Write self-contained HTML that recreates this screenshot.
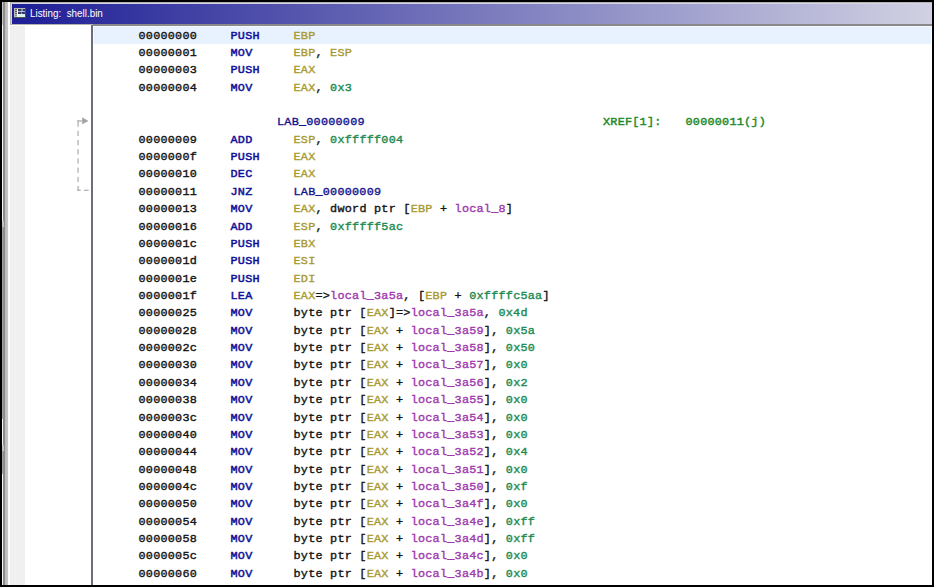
<!DOCTYPE html>
<html><head><meta charset="utf-8">
<style>
html,body{margin:0;padding:0;}
body{width:934px;height:587px;position:relative;overflow:hidden;background:#000;font-family:"Liberation Mono",monospace;}
.abs{position:absolute;}
#lstrip{left:2px;top:2px;width:8px;height:583px;background:linear-gradient(to right,#8c8c8c 0,#8c8c8c 2.6px,#b8b8b8 2.6px,#c6c6c6 5.8px,#fafafa 5.8px,#ffffff 8px);}
#title{left:10px;top:2px;width:922px;height:23px;background:#b4b4ac;}
#titleb{left:11px;top:3px;width:921px;height:20.8px;background:#d4d4ec;}
#titlein{left:12px;top:4px;width:920px;height:19.8px;background:linear-gradient(to right,rgb(30,30,150) 0px,rgb(240,240,240) 1080px);}
#titletxt{left:30px;top:4px;height:19.6px;line-height:19.6px;color:#fff;font-family:"Liberation Sans",sans-serif;font-size:10.6px;white-space:pre;transform-origin:0 0;transform:scaleX(0.93);}
#gpanel{left:10px;top:25px;width:15px;height:560px;background:#f0f0f0;border-top:1px solid #fafafa;box-sizing:border-box;}
#wpanel{left:25px;top:25px;width:66px;height:560px;background:#fff;}
#divider{left:91px;top:24.5px;width:2px;height:560.5px;background:#6c7076;}
#listing{left:93px;top:24.5px;width:839px;height:560.5px;background:#fff;}
#ltop{left:93px;top:24px;width:839px;height:1.5px;background:#8a8a8a;}
#hl{left:93px;top:25.5px;width:838px;height:18.3px;background:#e8f2fe;box-sizing:border-box;border-top:1px solid #f3f8ff;border-left:1.5px solid #f6faff;}
.row{position:absolute;left:0;width:934px;height:17.36px;line-height:17.36px;font-size:11.8px;letter-spacing:0.24px;-webkit-text-stroke-width:0.38px;white-space:pre;color:#111;}
.row span{position:absolute;top:0;}
.ad{left:138.5px;color:#141414;}
.mn{left:230.5px;color:#10109a;-webkit-text-stroke-width:0.5px;}
.op{left:293.5px;}
.op span{position:static!important;}
.r{color:#a89a30;}
.p{color:#141414;}
.c{color:#1c8a50;}
.v{color:#a03aae;}
.l{color:#14148e;}
.lab{color:#14148e;}
.xr{color:#1f8a2a;-webkit-text-stroke-width:0.45px;}
</style></head><body>
<div class="abs" id="lstrip"></div>
<div class="abs" style="left:2px;top:2px;width:1px;height:23px;background:#c8c8c8"></div>
<div class="abs" style="left:2px;top:25px;width:1px;height:196px;background:#f6f6f6"></div>
<div class="abs" style="left:2px;top:221px;width:2px;height:6px;background:#c4c4c4"></div>
<div class="abs" style="left:2px;top:227px;width:1px;height:192px;background:#a4a4a4"></div>
<div class="abs" style="left:2px;top:419px;width:1px;height:26px;background:#f6f6f6"></div>
<div class="abs" style="left:2px;top:445px;width:2px;height:6px;background:#c4c4c4"></div>
<div class="abs" style="left:2px;top:451px;width:1px;height:23px;background:#a4a4a4"></div>
<div class="abs" style="left:2px;top:474px;width:1px;height:111px;background:#f6f6f6"></div>
<div class="abs" style="left:8px;top:2px;width:2px;height:2px;background:#ffffff"></div>
<div class="abs" id="title"></div>
<div class="abs" id="titleb"></div>
<div class="abs" id="titlein"></div>
<svg class="abs" style="left:14px;top:8px" width="12" height="10" viewBox="0 0 12 10" shape-rendering="crispEdges">
<rect x="0" y="0" width="12" height="10" fill="#505050"/>
<rect x="0" y="0" width="11" height="9" fill="#b8b8b4"/>
<rect x="0.6" y="1" width="2.6" height="0.9" fill="#505050"/>
<rect x="0.6" y="3" width="2.6" height="0.9" fill="#505050"/>
<rect x="0.6" y="5" width="2.6" height="0.9" fill="#606060"/>
<rect x="0.6" y="7" width="2.6" height="0.9" fill="#909090"/>
<rect x="3.2" y="0.5" width="0.8" height="8.5" fill="#ffffff"/>
<rect x="4" y="0" width="7" height="1" fill="#b8b8a8"/>
<rect x="4" y="1" width="7" height="2" fill="#343c5c"/>
<rect x="6.5" y="1.3" width="2" height="1.2" fill="#6890c0"/>
<rect x="4" y="3" width="7" height="1.1" fill="#b8b4e4"/>
<rect x="4" y="4.4" width="7" height="1.5" fill="#343a64"/>
<rect x="7" y="4.4" width="0.8" height="1.5" fill="#9090c8"/>
<rect x="4" y="6" width="7" height="3" fill="#d8f6ee"/>
</svg>
<div class="abs" id="titletxt">Listing:  shell.bin</div>
<div class="abs" id="gpanel"></div>
<div class="abs" id="wpanel"></div>
<div class="abs" id="divider"></div>
<div class="abs" id="listing"></div>
<div class="abs" id="ltop"></div>
<div class="abs" id="hl"></div>
<svg class="abs" style="left:70px;top:110px" width="22" height="90" viewBox="0 0 22 90">
<g fill="#a4a4a4">
<rect x="7.5" y="10.4" width="1.1" height="6.3"/>
<rect x="7.5" y="20.8" width="1.1" height="5.2"/>
<rect x="7.5" y="30" width="1.1" height="5.3"/>
<rect x="7.5" y="39.2" width="1.1" height="5.3"/>
<rect x="7.5" y="48.4" width="1.1" height="5.3"/>
<rect x="7.5" y="57.6" width="1.1" height="5.3"/>
<rect x="7.5" y="66.8" width="1.1" height="5.3"/>
<rect x="7.5" y="76" width="1.1" height="5"/>
<rect x="7.5" y="79.7" width="3.2" height="1.1"/>
<rect x="14" y="79.7" width="4.7" height="1.1"/>
<rect x="7.5" y="10.4" width="5.5" height="1.1"/>
<path d="M12.2 7.2 L18.5 11 L12.2 14.3 Z"/>
</g>
</svg>
<div class="row" style="top:27.60px"><span class="ad">00000000</span><span class="mn">PUSH</span><span class="op"><span class="r">EBP</span></span></div>
<div class="row" style="top:44.96px"><span class="ad">00000001</span><span class="mn">MOV</span><span class="op"><span class="r">EBP</span><span class="p">,&nbsp;</span><span class="r">ESP</span></span></div>
<div class="row" style="top:62.32px"><span class="ad">00000003</span><span class="mn">PUSH</span><span class="op"><span class="r">EAX</span></span></div>
<div class="row" style="top:79.68px"><span class="ad">00000004</span><span class="mn">MOV</span><span class="op"><span class="r">EAX</span><span class="p">,&nbsp;</span><span class="c">0x3</span></span></div>
<div class="row" style="top:114.40px"><span class="lab" style="left:277px">LAB_00000009</span><span class="xr" style="left:603px">XREF[1]:</span><span class="xr" style="left:685.5px">00000011(j)</span></div>
<div class="row" style="top:131.76px"><span class="ad">00000009</span><span class="mn">ADD</span><span class="op"><span class="r">ESP</span><span class="p">,&nbsp;</span><span class="c">0xfffff004</span></span></div>
<div class="row" style="top:149.12px"><span class="ad">0000000f</span><span class="mn">PUSH</span><span class="op"><span class="r">EAX</span></span></div>
<div class="row" style="top:166.48px"><span class="ad">00000010</span><span class="mn">DEC</span><span class="op"><span class="r">EAX</span></span></div>
<div class="row" style="top:183.84px"><span class="ad">00000011</span><span class="mn">JNZ</span><span class="op"><span class="l">LAB_00000009</span></span></div>
<div class="row" style="top:201.20px"><span class="ad">00000013</span><span class="mn">MOV</span><span class="op"><span class="r">EAX</span><span class="p">,&nbsp;dword&nbsp;ptr&nbsp;[</span><span class="r">EBP</span><span class="p">&nbsp;+&nbsp;</span><span class="v">local_8</span><span class="p">]</span></span></div>
<div class="row" style="top:218.56px"><span class="ad">00000016</span><span class="mn">ADD</span><span class="op"><span class="r">ESP</span><span class="p">,&nbsp;</span><span class="c">0xfffff5ac</span></span></div>
<div class="row" style="top:235.92px"><span class="ad">0000001c</span><span class="mn">PUSH</span><span class="op"><span class="r">EBX</span></span></div>
<div class="row" style="top:253.28px"><span class="ad">0000001d</span><span class="mn">PUSH</span><span class="op"><span class="r">ESI</span></span></div>
<div class="row" style="top:270.64px"><span class="ad">0000001e</span><span class="mn">PUSH</span><span class="op"><span class="r">EDI</span></span></div>
<div class="row" style="top:288.00px"><span class="ad">0000001f</span><span class="mn">LEA</span><span class="op"><span class="r">EAX</span><span class="p">=&gt;</span><span class="v">local_3a5a</span><span class="p">,&nbsp;[</span><span class="r">EBP</span><span class="p">&nbsp;+&nbsp;</span><span class="c">0xffffc5aa</span><span class="p">]</span></span></div>
<div class="row" style="top:305.36px"><span class="ad">00000025</span><span class="mn">MOV</span><span class="op"><span class="p">byte&nbsp;ptr&nbsp;[</span><span class="r">EAX</span><span class="p">]=&gt;</span><span class="v">local_3a5a</span><span class="p">,&nbsp;</span><span class="c">0x4d</span></span></div>
<div class="row" style="top:322.72px"><span class="ad">00000028</span><span class="mn">MOV</span><span class="op"><span class="p">byte&nbsp;ptr&nbsp;[</span><span class="r">EAX</span><span class="p">&nbsp;+&nbsp;</span><span class="v">local_3a59</span><span class="p">],&nbsp;</span><span class="c">0x5a</span></span></div>
<div class="row" style="top:340.08px"><span class="ad">0000002c</span><span class="mn">MOV</span><span class="op"><span class="p">byte&nbsp;ptr&nbsp;[</span><span class="r">EAX</span><span class="p">&nbsp;+&nbsp;</span><span class="v">local_3a58</span><span class="p">],&nbsp;</span><span class="c">0x50</span></span></div>
<div class="row" style="top:357.44px"><span class="ad">00000030</span><span class="mn">MOV</span><span class="op"><span class="p">byte&nbsp;ptr&nbsp;[</span><span class="r">EAX</span><span class="p">&nbsp;+&nbsp;</span><span class="v">local_3a57</span><span class="p">],&nbsp;</span><span class="c">0x0</span></span></div>
<div class="row" style="top:374.80px"><span class="ad">00000034</span><span class="mn">MOV</span><span class="op"><span class="p">byte&nbsp;ptr&nbsp;[</span><span class="r">EAX</span><span class="p">&nbsp;+&nbsp;</span><span class="v">local_3a56</span><span class="p">],&nbsp;</span><span class="c">0x2</span></span></div>
<div class="row" style="top:392.16px"><span class="ad">00000038</span><span class="mn">MOV</span><span class="op"><span class="p">byte&nbsp;ptr&nbsp;[</span><span class="r">EAX</span><span class="p">&nbsp;+&nbsp;</span><span class="v">local_3a55</span><span class="p">],&nbsp;</span><span class="c">0x0</span></span></div>
<div class="row" style="top:409.52px"><span class="ad">0000003c</span><span class="mn">MOV</span><span class="op"><span class="p">byte&nbsp;ptr&nbsp;[</span><span class="r">EAX</span><span class="p">&nbsp;+&nbsp;</span><span class="v">local_3a54</span><span class="p">],&nbsp;</span><span class="c">0x0</span></span></div>
<div class="row" style="top:426.88px"><span class="ad">00000040</span><span class="mn">MOV</span><span class="op"><span class="p">byte&nbsp;ptr&nbsp;[</span><span class="r">EAX</span><span class="p">&nbsp;+&nbsp;</span><span class="v">local_3a53</span><span class="p">],&nbsp;</span><span class="c">0x0</span></span></div>
<div class="row" style="top:444.24px"><span class="ad">00000044</span><span class="mn">MOV</span><span class="op"><span class="p">byte&nbsp;ptr&nbsp;[</span><span class="r">EAX</span><span class="p">&nbsp;+&nbsp;</span><span class="v">local_3a52</span><span class="p">],&nbsp;</span><span class="c">0x4</span></span></div>
<div class="row" style="top:461.60px"><span class="ad">00000048</span><span class="mn">MOV</span><span class="op"><span class="p">byte&nbsp;ptr&nbsp;[</span><span class="r">EAX</span><span class="p">&nbsp;+&nbsp;</span><span class="v">local_3a51</span><span class="p">],&nbsp;</span><span class="c">0x0</span></span></div>
<div class="row" style="top:478.96px"><span class="ad">0000004c</span><span class="mn">MOV</span><span class="op"><span class="p">byte&nbsp;ptr&nbsp;[</span><span class="r">EAX</span><span class="p">&nbsp;+&nbsp;</span><span class="v">local_3a50</span><span class="p">],&nbsp;</span><span class="c">0xf</span></span></div>
<div class="row" style="top:496.32px"><span class="ad">00000050</span><span class="mn">MOV</span><span class="op"><span class="p">byte&nbsp;ptr&nbsp;[</span><span class="r">EAX</span><span class="p">&nbsp;+&nbsp;</span><span class="v">local_3a4f</span><span class="p">],&nbsp;</span><span class="c">0x0</span></span></div>
<div class="row" style="top:513.68px"><span class="ad">00000054</span><span class="mn">MOV</span><span class="op"><span class="p">byte&nbsp;ptr&nbsp;[</span><span class="r">EAX</span><span class="p">&nbsp;+&nbsp;</span><span class="v">local_3a4e</span><span class="p">],&nbsp;</span><span class="c">0xff</span></span></div>
<div class="row" style="top:531.04px"><span class="ad">00000058</span><span class="mn">MOV</span><span class="op"><span class="p">byte&nbsp;ptr&nbsp;[</span><span class="r">EAX</span><span class="p">&nbsp;+&nbsp;</span><span class="v">local_3a4d</span><span class="p">],&nbsp;</span><span class="c">0xff</span></span></div>
<div class="row" style="top:548.40px"><span class="ad">0000005c</span><span class="mn">MOV</span><span class="op"><span class="p">byte&nbsp;ptr&nbsp;[</span><span class="r">EAX</span><span class="p">&nbsp;+&nbsp;</span><span class="v">local_3a4c</span><span class="p">],&nbsp;</span><span class="c">0x0</span></span></div>
<div class="row" style="top:565.76px"><span class="ad">00000060</span><span class="mn">MOV</span><span class="op"><span class="p">byte&nbsp;ptr&nbsp;[</span><span class="r">EAX</span><span class="p">&nbsp;+&nbsp;</span><span class="v">local_3a4b</span><span class="p">],&nbsp;</span><span class="c">0x0</span></span></div>
</body></html>
